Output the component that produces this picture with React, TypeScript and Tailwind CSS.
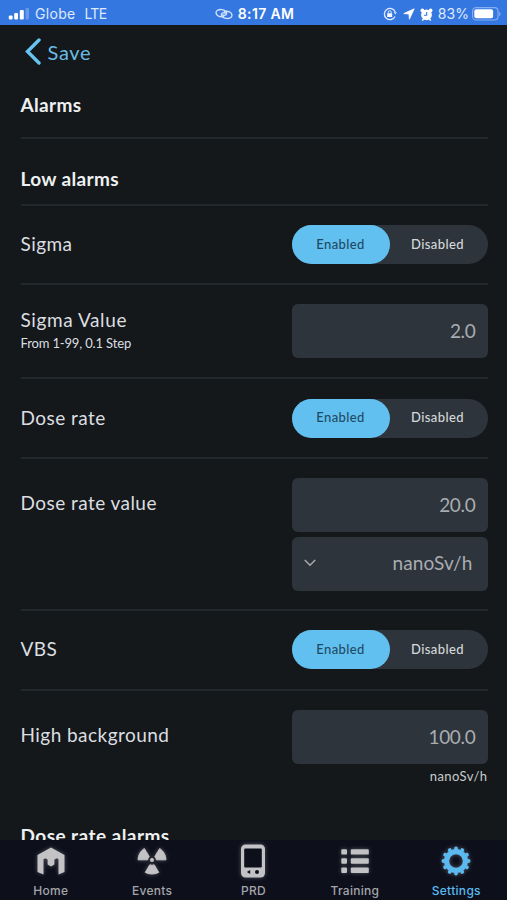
import React, { useState } from "react";

type ToggleProps = {
  value: boolean;
  onChange: (value: boolean) => void;
};

const Toggle: React.FC<ToggleProps> = ({ value, onChange }) => {
  const active = "bg-[#62c0f0] text-[#1f4a63]";
  const inactive = "text-[#d5d8db]";
  return (
    <div className="flex h-[39px] w-[196px] rounded-full bg-[#2d343c] text-[13px] font-medium tracking-[0.4px]">
      <button
        className={`w-1/2 rounded-full pb-0.5 ${value ? active : inactive}`}
        onClick={() => onChange(true)}
      >
        Enabled
      </button>
      <button
        className={`w-1/2 rounded-full pr-0.5 pb-0.5 ${value ? inactive : active}`}
        onClick={() => onChange(false)}
      >
        Disabled
      </button>
    </div>
  );
};

const ToggleRow: React.FC<{ label: string }> = ({ label }) => {
  const [enabled, setEnabled] = useState<boolean>(true);
  return (
    <div className="flex h-[79.4px] items-center justify-between border-b-2 border-[#23282c]">
      <span className="pb-px">{label}</span>
      <Toggle value={enabled} onChange={setEnabled} />
    </div>
  );
};

const ValueBox: React.FC<{ value: string }> = ({ value }) => (
  <div className="flex h-[54px] w-[196px] items-center justify-end rounded-md bg-[#2d343c] pr-3 tracking-[-0.3px] text-[#a9acb0]">
    {value}
  </div>
);

const StatusBar: React.FC = () => (
  <div className="grid h-[25px] grid-cols-[1fr_auto_1fr] items-center bg-[#3577e1] pr-1.5 pl-2 font-['Inter',sans-serif] text-[14px] text-[#dfeafc]">
    <div className="flex items-center pt-0.5">
      <svg width="21" height="12" viewBox="0 0 21 12" fill="#fff">
        <rect x="0.8" y="7.5" width="3.8" height="4" rx="1" />
        <rect x="6.2" y="5" width="3.8" height="6.5" rx="1" />
        <rect x="11.8" y="2" width="4" height="9.5" rx="1" />
        <rect x="17.5" y="0" width="3.5" height="11.5" rx="1" opacity=".25" />
      </svg>
      <span className="ml-1.5 tracking-[0.3px]">Globe</span>
      <span className="ml-[9px] tracking-[-0.7px]">LTE</span>
    </div>
    <div className="flex items-center gap-[5px] pt-0.5 font-semibold text-white">
      <svg
        width="18"
        height="12"
        viewBox="0 0 18 12"
        fill="none"
        stroke="#d0e0fb"
        strokeWidth="1.4"
        strokeLinecap="round"
      >
        <path d="M8.6 8.4C5 9.4 1 7.6 1 4.8 1 2.2 4 1.2 6.8 1.6 10 2 12 4 11.6 5.8 11.3 7.2 9.4 7.6 7.6 7" />
        <path d="M9.4 3.6C13 2.6 17 4.4 17 7.2 17 9.8 14 10.8 11.2 10.4 8 10 6 8 6.4 6.2 6.7 4.8 8.6 4.4 10.4 5" />
      </svg>
      <span className="tracking-[0.35px]">8:17 AM</span>
    </div>
    <div className="flex items-center justify-end pt-0.5">
      <svg width="14" height="14" viewBox="0 0 14 14" fill="none" stroke="#dfeafc">
        <path d="M12.2 5A5.6 5.6 0 1 0 12 9.5" strokeWidth="1.3" />
        <path d="M10.6 5.2h3.2l-1.5 2.4z" fill="#dfeafc" stroke="none" />
        <rect x="4.2" y="6.2" width="5" height="3.8" rx=".5" fill="#fff" stroke="none" />
        <path d="M5.2 6.4V5.2a1.5 1.5 0 0 1 3 0v1.2" />
      </svg>
      <svg className="ml-[6px]" width="12" height="12" viewBox="0 0 12 12" fill="#fff">
        <path
          d="M11.2.8.8 5.6l5.2.4.4 5.2z"
          stroke="#fff"
          strokeWidth=".8"
          strokeLinejoin="round"
        />
      </svg>
      <svg className="ml-[5px]" width="13" height="13" viewBox="0 0 13 13" fill="#fff">
        <circle cx="2.4" cy="2.4" r="1.9" />
        <circle cx="10.6" cy="2.4" r="1.9" />
        <circle cx="6.5" cy="6.8" r="5.4" />
        <path d="m2.2 12.5 2-2M10.8 12.5l-2-2" stroke="#fff" strokeWidth="1.5" />
        <path d="M6.7 4v3.2H3.9" fill="none" stroke="#3577e1" strokeWidth="1.1" />
      </svg>
      <span className="ml-[5px] tracking-[0.1px]">83%</span>
      <svg className="ml-[3px]" width="29" height="14" viewBox="0 0 29 14">
        <rect x=".6" y=".6" width="25.4" height="12.4" rx="3.5" fill="none" stroke="#86b0f2" strokeWidth="1.1" />
        <rect x="2.3" y="2.3" width="18.8" height="9" rx="2" fill="#fff" />
        <path d="M27.2 4.8c1.8.5 1.8 3.7 0 4.2z" fill="#86b0f2" />
      </svg>
    </div>
  </div>
);

const HomeIcon: React.FC = () => (
  <svg width="28" height="28" viewBox="0 0 28 28" fill="currentColor">
    <path d="M14 0.5 27.5 8V25L21.5 27.5V12.2L19.8 11.2 17.4 12.4V17.5L14 19.5 10.6 17.5V12.4L8.2 11.2 6.5 12.2V27.5L0.5 25V8Z" />
  </svg>
);

const EventsIcon: React.FC = () => (
  <svg width="30" height="28" viewBox="0 0 30 28" fill="currentColor">
    <circle cx="15" cy="13" r="2" />
    <g stroke="currentColor" strokeWidth="1" strokeLinejoin="round">
      <path d="M10.6 12.8H1Q1.3 5.6 7.3 1.5L12.2 9.6Q10.8 11 10.6 12.8Z" />
      <path d="M19.4 12.8H29Q28.7 5.6 22.7 1.5L17.8 9.6Q19.2 11 19.4 12.8Z" />
      <path d="M12.8 17.8 8.3 25.4Q15 28.6 21.7 25.4L17.2 17.8Q15 18.8 12.8 17.8Z" />
    </g>
  </svg>
);

const PrdIcon: React.FC = () => (
  <svg width="26" height="34" viewBox="0 0 26 34">
    <rect x="1" y="0.5" width="24" height="33" rx="4.5" fill="currentColor" />
    <rect x="4.2" y="4.5" width="17.6" height="19" rx="1" fill="#0d101b" />
    <path d="m6.8 28 3.4-2.1v4.2z" fill="#0d101b" />
    <circle cx="17" cy="28" r="2" fill="#0d101b" />
  </svg>
);

const TrainingIcon: React.FC = () => (
  <svg width="28" height="25" viewBox="0 0 28 25" fill="currentColor">
    {[0.2, 9.3, 18.6].map((y) => (
      <React.Fragment key={y}>
        <rect x="0.3" y={y} width="5.7" height="5.4" rx="0.9" />
        <rect x="9.8" y={y} width="18" height="5.4" rx="0.9" />
      </React.Fragment>
    ))}
  </svg>
);

const SettingsIcon: React.FC = () => (
  <svg width="30" height="30" viewBox="0 0 30 30" fill="none" stroke="currentColor">
    <circle cx="15" cy="15" r="9.4" strokeWidth="5.2" />
    {/* 12 teeth around the ring */}
    <circle
      cx="15"
      cy="15"
      r="12.6"
      strokeWidth="3.8"
      strokeLinecap="round"
      pathLength="24"
      strokeDasharray="0.01 1.99"
    />
  </svg>
);

const tabs = [
  { label: "Home", icon: <HomeIcon /> },
  { label: "Events", icon: <EventsIcon /> },
  { label: "PRD", icon: <PrdIcon /> },
  { label: "Training", icon: <TrainingIcon /> },
  { label: "Settings", icon: <SettingsIcon /> },
];

const TabBar: React.FC = () => {
  const [current, setCurrent] = useState<string>("Settings");
  return (
    <nav className="grid h-[60px] shrink-0 grid-cols-5 bg-[#0d101b] font-['Inter',sans-serif] text-[12px] font-medium">
      {tabs.map((tab) => (
        <button
          key={tab.label}
          className={`flex flex-col items-center ${
            current === tab.label ? "text-[#5bb9f0]" : "text-[#a4a5aa]"
          }`}
          onClick={() => setCurrent(tab.label)}
        >
          <span
            className={`flex h-[42px] items-center drop-shadow-[0_0_2px_rgba(190,190,200,0.4)] ${
              current === tab.label ? "" : "text-[#c3c3c5]"
            }`}
          >
            {tab.icon}
          </span>
          <span className="leading-[18px] tracking-[0.3px]">{tab.label}</span>
        </button>
      ))}
    </nav>
  );
};

export default function App() {
  return (
    <div className="flex h-[900px] w-[507px] flex-col overflow-hidden bg-[#14181b] font-['Lato',sans-serif] text-[19px] leading-6 tracking-[0.45px] text-[#dcdee0]">
      <StatusBar />
      <main className="min-h-0 flex-1 overflow-hidden pr-[19.5px] pl-[20.5px]">
        <button className="flex h-[54px] items-center gap-[7px] pb-px pl-[4px] text-[20px] tracking-[0.7px] text-[#69bce2]">
          <svg width="16" height="27" viewBox="0 0 16 27" fill="none">
            <path d="M14 2 2.5 13.5 14 25" stroke="#67c3ef" strokeWidth="3.4" strokeLinecap="round" />
          </svg>
          Save
        </button>

        <h1 className="h-[60px] border-b-2 border-[#23282c] pt-[14px] font-bold tracking-[0.35px] text-[#eef0f1]">
          Alarms
        </h1>
        <h2 className="h-[67px] border-b-2 border-[#23282c] pt-[28px] font-bold tracking-[0.35px] text-[#eef0f1]">
          Low alarms
        </h2>

        <ToggleRow label="Sigma" />
        <div className="flex h-[94px] items-center justify-between border-b-2 border-[#23282c]">
          <div className="pt-px">
            <div className="leading-5 tracking-[0.6px]">Sigma Value</div>
            <div className="pt-[3px] text-[13px] leading-5 tracking-[-0.15px]">
              From 1-99, 0.1 Step
            </div>
          </div>
          <ValueBox value="2.0" />
        </div>

        <ToggleRow label="Dose rate" />
        <div className="flex h-[152.4px] justify-between border-b-2 border-[#23282c] pt-[19px]">
          <span className="pt-[13px]">Dose rate value</span>
          <div className="flex flex-col gap-[5px]">
            <ValueBox value="20.0" />
            <div className="flex h-[54px] w-[196px] items-center justify-between rounded-md bg-[#2d343c] pr-[15px] pb-px pl-3 tracking-[0.1px] text-[#a9acb0]">
              <svg width="12" height="8" viewBox="0 0 12 8" fill="none" stroke="#a9acb0" strokeWidth="1.5">
                <path d="m.8 1 5.2 5.2L11.2 1" />
              </svg>
              nanoSv/h
            </div>
          </div>
        </div>

        <ToggleRow label="VBS" />
        <div className="flex h-[133px] justify-between pt-[19px]">
          <span className="pt-[13px]">High background</span>
          <div className="text-right">
            <ValueBox value="100.0" />
            <div className="text-[13px] text-[#c9cbcd]">nanoSv/h</div>
          </div>
        </div>
        <h2 className="font-bold text-[#eef0f1]">Dose rate alarms</h2>
      </main>
      <TabBar />
    </div>
  );
}
